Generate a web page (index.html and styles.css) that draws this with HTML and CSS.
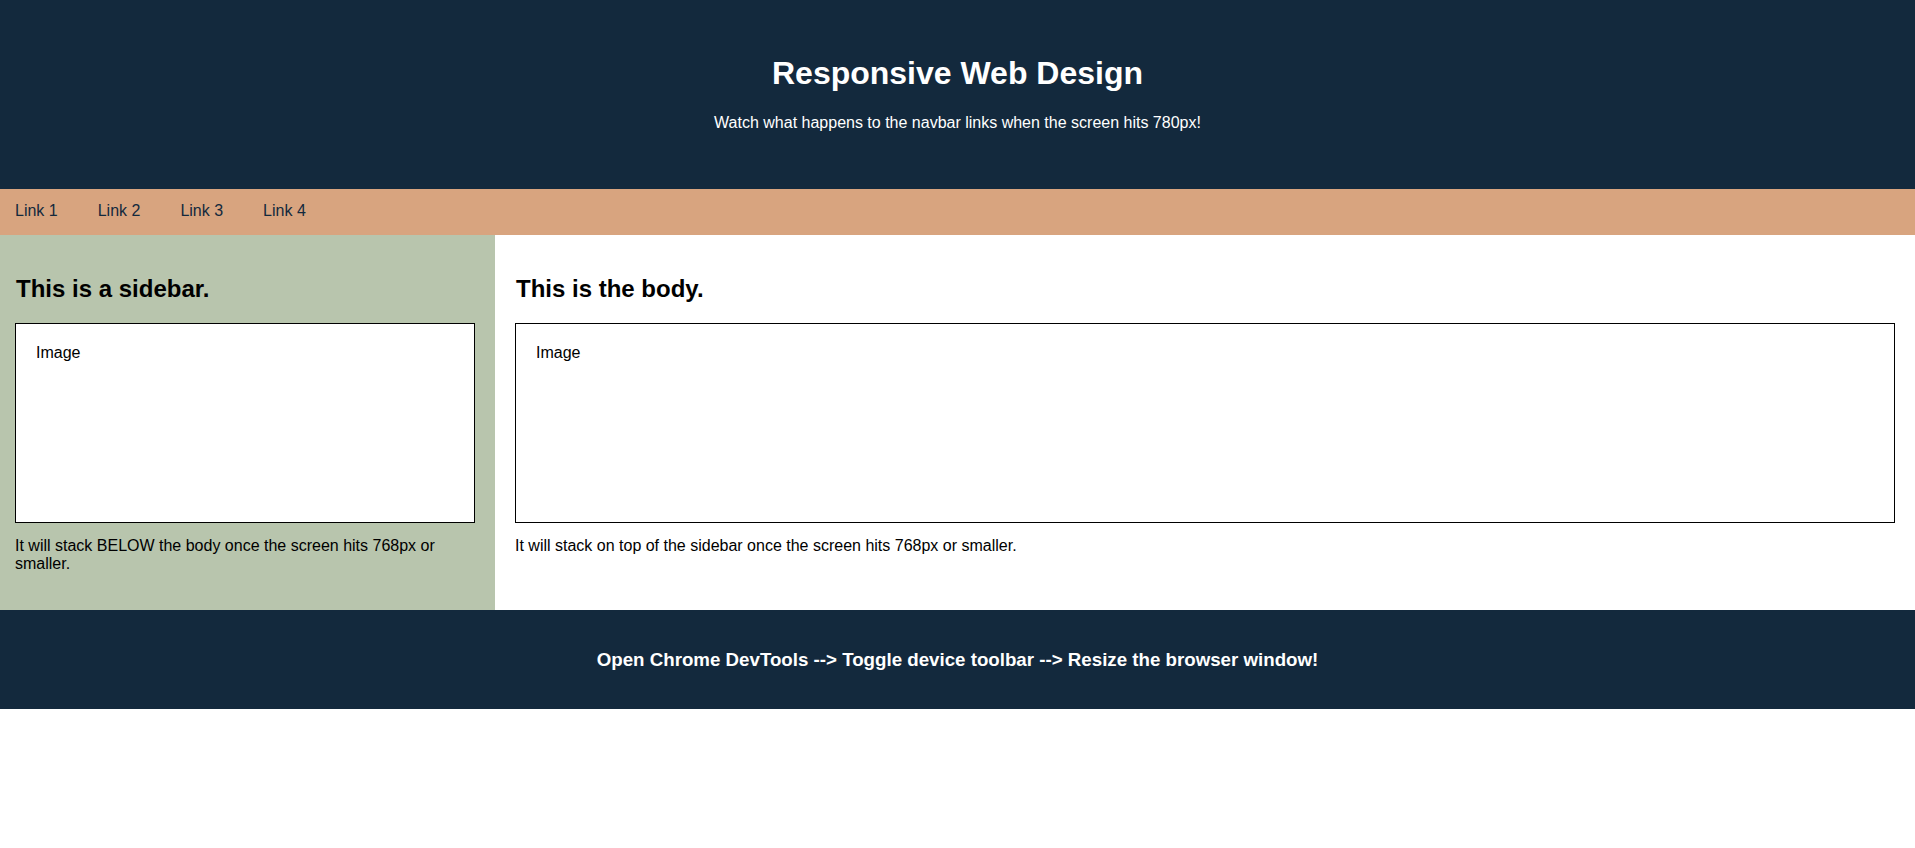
FILE: index.html
```html
<!DOCTYPE html>
<html lang="en">
<head>
<meta charset="utf-8">
<title>Responsive Web Design</title>
<link rel="stylesheet" href="styles.css">
</head>
<body>
  <header class="site-header">
    <h1 class="site-title">Responsive Web Design</h1>
    <p class="site-subtitle">Watch what happens to the navbar links when the screen hits 780px!</p>
  </header>
  <nav class="navbar">
    <a class="nav-link" href="#">Link 1</a>
    <a class="nav-link" href="#">Link 2</a>
    <a class="nav-link" href="#">Link 3</a>
    <a class="nav-link" href="#">Link 4</a>
  </nav>
  <div class="layout">
    <aside class="sidebar">
      <h2 class="section-title">This is a sidebar.</h2>
      <div class="image-box">Image</div>
      <p class="section-text">It will stack BELOW the body once the screen hits 768px or smaller.</p>
    </aside>
    <main class="content">
      <h2 class="section-title">This is the body.</h2>
      <div class="image-box">Image</div>
      <p class="section-text">It will stack on top of the sidebar once the screen hits 768px or smaller.</p>
    </main>
  </div>
  <footer class="site-footer">
    <h3 class="footer-text">Open Chrome DevTools --&gt; Toggle device toolbar --&gt; Resize the browser window!</h3>
  </footer>
</body>
</html>
```

FILE: styles.css
```css
* {
  box-sizing: border-box;
}

body {
  margin: 0;
  font-family: "Liberation Sans", Arial, sans-serif;
  font-size: 16px;
  color: #000;
  background: #fff;
}

.site-header {
  background: #13293d;
  color: #fff;
  text-align: center;
  padding: 55px 0 57px;
}

.site-title {
  margin: 0 0 22px;
  font-size: 32px;
  font-weight: bold;
  line-height: normal;
}

.site-subtitle {
  margin: 0;
  font-size: 16px;
  line-height: normal;
}

.navbar {
  background: #d8a47f;
  height: 46px;
  padding: 13px 15px 0;
  display: flex;
  gap: 40px;
}

.nav-link {
  color: #13293d;
  text-decoration: none;
  font-size: 16px;
  line-height: normal;
}

.layout {
  display: grid;
  grid-template-columns: 495px 1fr;
}

.sidebar {
  background: #b8c5ad;
  padding: 40px 20px 21px 15px;
}

.content {
  background: #fff;
  padding: 40px 20px 21px 20px;
}

.section-title {
  margin: 0 0 20px;
  padding-left: 1px;
  font-size: 24px;
  font-weight: bold;
  line-height: normal;
}

.image-box {
  background: #fff;
  border: 1px solid #000;
  height: 200px;
  padding: 20px;
  line-height: normal;
}

.section-text {
  margin: 14px 0 16px;
  line-height: normal;
}

.site-footer {
  background: #13293d;
  color: #fff;
  text-align: center;
  padding: 20px 0;
}

.footer-text {
  margin: 18.72px 0;
  font-size: 18.72px;
  font-weight: bold;
  line-height: normal;
}
```
